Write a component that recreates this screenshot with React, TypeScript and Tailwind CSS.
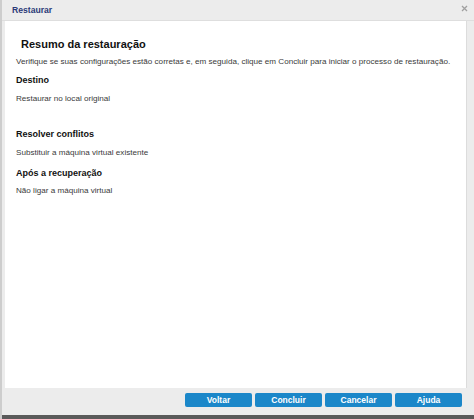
import React from "react";

const F = { fontFamily: '"Liberation Sans", Arial, sans-serif' };

function Btn({ label }: { label: string }) {
  return (
    <button className="w-[67px] h-[14px] bg-[#1b87c9] text-white text-[8.5px] font-bold leading-[14px] rounded-[2px] flex items-center justify-center">
      {label}
    </button>
  );
}

export default function App() {
  return (
    <div
      style={F}
      className="w-[474px] h-[419px] flex flex-col bg-[#ececec] border-l-2 border-[#cdcdcd] overflow-hidden"
    >
      <div className="h-[21px] shrink-0 flex items-center justify-between pl-[10px] pr-[6px] border-b border-[#dedede]">
        <span className="text-[8.6px] font-bold text-[#2b3a78]">Restaurar</span>
        <svg width="7" height="7" viewBox="0 0 7 7" className="mb-[3px]">
          <path d="M1 1L6 6M6 1L1 6" stroke="#a0a0a0" strokeWidth="1.3" />
        </svg>
      </div>
      <div className="flex-1 ml-[3px] mr-[7px] bg-white border-r border-[#dcdcdc] pl-[11px] pt-[15px]">
        <div className="ml-[5px] text-[11px] font-bold leading-[16px] text-[#111]">
          Resumo da restauração
        </div>
        <div className="mt-[5px] text-[8.1px] leading-[10px] text-[#3a3a3a] whitespace-nowrap">
          Verifique se suas configurações estão corretas e, em seguida, clique em Concluir para iniciar o processo de restauração.
        </div>
        <div className="mt-[8px] text-[9px] font-bold leading-[10px] text-[#111]">Destino</div>
        <div className="mt-[9px] text-[8.1px] leading-[10px] text-[#3a3a3a]">Restaurar no local original</div>
        <div className="mt-[25px] text-[9px] font-bold leading-[10px] text-[#111]">Resolver conflitos</div>
        <div className="mt-[9px] text-[8.1px] leading-[10px] text-[#3a3a3a]">Substituir a máquina virtual existente</div>
        <div className="mt-[10px] text-[9px] font-bold leading-[10px] text-[#111]">Após a recuperação</div>
        <div className="mt-[8px] text-[8.1px] leading-[10px] text-[#3a3a3a]">Não ligar a máquina virtual</div>
      </div>
      <div className="h-[27px] shrink-0 flex justify-end items-start pt-[5px] pr-[12px] gap-[3px]">
        <Btn label="Voltar" />
        <Btn label="Concluir" />
        <Btn label="Cancelar" />
        <Btn label="Ajuda" />
      </div>
      <div className="h-[4px] shrink-0 bg-[#5a5a5a] -ml-[2px]" />
    </div>
  );
}
